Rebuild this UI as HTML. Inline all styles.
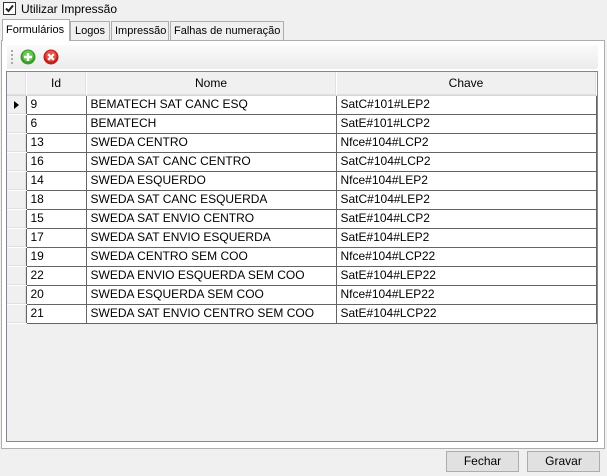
<!DOCTYPE html>
<html><head><meta charset="utf-8"><style>
*{box-sizing:border-box;margin:0;padding:0}
body{width:607px;height:476px;background:#f0f0f0;font-family:"Liberation Sans",sans-serif;font-size:12px;color:#000;position:relative;overflow:hidden}
.abs{position:absolute}
.chk{left:3px;top:2px;width:13px;height:13px;border:1px solid #333;background:#fff}
.tab{top:21px;height:19px;border:1px solid #adadad;border-bottom:none;background:#f0f0f0;padding:3px 0 0 3px;white-space:nowrap;font-size:11px;overflow:hidden}
.panel{left:1px;top:40px;width:604px;height:409px;border:1px solid #adadad;background:#fff}
.tb{left:7px;top:45px;width:591px;height:24px;background:linear-gradient(#fafafa,#ececec);border-radius:0 0 3px 0}
.grid{left:6px;top:71px;width:592px;height:371px;border:1px solid #828790;background:#f0f0f0}
table{border-collapse:collapse;position:absolute;left:0;top:0;table-layout:fixed}
td{height:19px;line-height:17px;border:1px solid #646464;background:#fff;padding:0 4px;white-space:nowrap;overflow:hidden;vertical-align:middle}
th{height:23px;line-height:21px;font-weight:normal;background:#f0f0f0;border-right:1px solid #fff;border-bottom:1px solid #d8d8d8;box-shadow:inset -1px -1px 0 #e0e0e0;padding:0}
td.rh{background:#f0f0f0;border:none;border-right:1px solid #646464;border-bottom:1px solid #fff;box-shadow:inset -1px -1px 0 #e0e0e0;padding:0;position:relative}
.btn{top:451px;width:73px;height:21px;border:1px solid #adadad;background:#e1e1e1;text-align:center;line-height:19px}
</style></head><body>
<div class="abs chk"><svg width="11" height="11" style="position:absolute;left:0;top:0"><path d="M2 5.5 L4.5 8 L9 2.5" stroke="#222" stroke-width="2" fill="none"/></svg></div>
<div class="abs" style="left:21px;top:2px">Utilizar Impressão</div>
<div class="abs panel"></div>
<div class="abs tab" style="left:2px;top:19px;height:22px;width:68px;background:#fff;z-index:2;padding-top:4px">Formulários</div>
<div class="abs tab" style="left:70px;width:40px;padding-left:4px">Logos</div>
<div class="abs tab" style="left:111px;width:58px">Impressão</div>
<div class="abs tab" style="left:170px;width:114px">Falhas de numeração</div>
<div class="abs tb">
<div class="abs" style="left:4px;top:5px;width:2px;height:14px;background:repeating-linear-gradient(#aaa 0 2px,transparent 2px 4px)"></div>
<svg class="abs" style="left:13px;top:4px" width="16" height="16"><circle cx="8" cy="8" r="7.5" fill="#3a9c2a"/><circle cx="8" cy="7" r="5.5" fill="#6cc456"/><path d="M8 4v8M4 8h8" stroke="#fff" stroke-width="2.4"/></svg>
<svg class="abs" style="left:36px;top:4px" width="16" height="16"><circle cx="8" cy="8" r="7.5" fill="#c0201c"/><circle cx="8" cy="7" r="5.5" fill="#e8504a"/><path d="M5.2 5.2l5.6 5.6M10.8 5.2l-5.6 5.6" stroke="#fff" stroke-width="2.2"/></svg>
</div>
<div class="abs grid">
<table>
<colgroup><col style="width:19px"><col style="width:60px"><col style="width:250px"><col style="width:260px"></colgroup>
<tr><th></th><th>Id</th><th>Nome</th><th>Chave</th></tr>
<tr><td class="rh"><svg width="18" height="14" style="display:block;position:absolute;left:0;top:2px"><path d="M7 3l5 4-5 4z" fill="#000"/></svg></td><td>9</td><td>BEMATECH SAT CANC ESQ</td><td>SatC#101#LEP2</td></tr>
<tr><td class="rh"></td><td>6</td><td>BEMATECH</td><td>SatE#101#LCP2</td></tr>
<tr><td class="rh"></td><td>13</td><td>SWEDA CENTRO</td><td>Nfce#104#LCP2</td></tr>
<tr><td class="rh"></td><td>16</td><td>SWEDA SAT CANC CENTRO</td><td>SatC#104#LCP2</td></tr>
<tr><td class="rh"></td><td>14</td><td>SWEDA ESQUERDO</td><td>Nfce#104#LEP2</td></tr>
<tr><td class="rh"></td><td>18</td><td>SWEDA SAT CANC ESQUERDA</td><td>SatC#104#LEP2</td></tr>
<tr><td class="rh"></td><td>15</td><td>SWEDA SAT ENVIO CENTRO</td><td>SatE#104#LCP2</td></tr>
<tr><td class="rh"></td><td>17</td><td>SWEDA SAT ENVIO ESQUERDA</td><td>SatE#104#LEP2</td></tr>
<tr><td class="rh"></td><td>19</td><td>SWEDA CENTRO SEM COO</td><td>Nfce#104#LCP22</td></tr>
<tr><td class="rh"></td><td>22</td><td>SWEDA ENVIO ESQUERDA SEM COO</td><td>SatE#104#LEP22</td></tr>
<tr><td class="rh"></td><td>20</td><td>SWEDA ESQUERDA SEM COO</td><td>Nfce#104#LEP22</td></tr>
<tr><td class="rh"></td><td>21</td><td>SWEDA SAT ENVIO CENTRO SEM COO</td><td>SatE#104#LCP22</td></tr>
</table>
</div>
<div class="abs btn" style="left:446px">Fechar</div>
<div class="abs btn" style="left:527px">Gravar</div>
</body></html>
